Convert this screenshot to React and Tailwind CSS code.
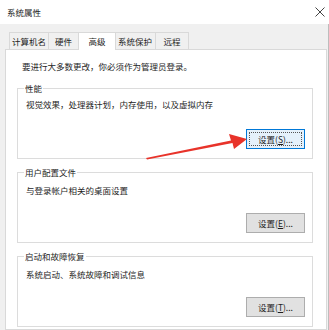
import React from "react";

function Btn({ label, k, focused }) {
  return (
    <div
      className={
        "w-[59px] h-[20px] flex items-center justify-center text-[8.5px] leading-none " +
        (focused
          ? "bg-[#e5f1fb] border border-[#0078d7] p-[2px]"
          : "bg-[#e1e1e1] border border-[#adadad]")
      }
    >
      {focused ? (
        <div className="w-full h-full border border-dotted border-[#555] flex items-center justify-center">
          <span>设置(<span className="underline">{k}</span>)...</span>
        </div>
      ) : (
        <span>设置(<span className="underline">{k}</span>)...</span>
      )}
    </div>
  );
}

function Group({ title, text, k, focused, pt }) {
  return (
    <div className="relative h-[71px] border border-[#dcdcdc] flex flex-col pl-[8px] pr-[7px]" style={{ paddingTop: pt }}>
      <span className="absolute left-[6px] -top-[9px] bg-white px-[1px] text-[8.5px] leading-[16px]">{title}</span>
      <div className="text-[8.5px] leading-[16px]">{text}</div>
      <div className="flex-1 flex items-end justify-end pb-[9px]">
        <Btn k={k} focused={focused} />
      </div>
    </div>
  );
}

export default function App() {
  return (
    <div
      className="relative w-[329px] h-[330px] overflow-hidden bg-white text-[#1e1e1e] flex flex-col"
      style={{ fontFamily: '"Noto Sans CJK SC", "Noto Sans", sans-serif' }}
    >
      <div className="h-[24px] flex items-center justify-between pl-[7px] pr-[2px] bg-white">
        <span className="text-[8.5px] leading-none">系统属性</span>
        <svg width="10" height="10" viewBox="0 0 10 10" className="mr-[2px]">
          <path d="M0.5 0.5L9.5 9.5M9.5 0.5L0.5 9.5" stroke="#444" strokeWidth="1" />
        </svg>
      </div>
      <div className="flex-1 bg-[#f0f0f0] flex flex-col pl-[5px] pr-[1px] border-r border-[#bdbdbd]">
        <div className="h-[25px] flex items-end pl-[4px] text-[8.5px]">
          <div className="h-[17px] w-[40px] border border-b-0 border-[#d9d9d9] flex items-center justify-center">计算机名</div>
          <div className="h-[17px] w-[30px] border border-b-0 border-l-0 border-[#d9d9d9] flex items-center justify-center">硬件</div>
          <div className="h-[18px] w-[38px] -mb-[1px] relative z-10 bg-white border border-b-0 border-[#d9d9d9] flex items-center justify-center -mx-[1px]">高级</div>
          <div className="h-[17px] w-[41px] border border-b-0 border-l-0 border-[#d9d9d9] flex items-center justify-center">系统保护</div>
          <div className="h-[17px] w-[33px] border border-b-0 border-l-0 border-[#d9d9d9] flex items-center justify-center">远程</div>
        </div>
        <div className="flex-1 bg-white border border-[#d9d9d9] pt-[8px] pl-[11px] pr-[13px] flex flex-col">
          <div className="text-[8.5px] leading-[16px] pl-[5px]">要进行大多数更改，你必须作为管理员登录。</div>
          <div className="mt-[14px] flex flex-col gap-[13px]">
            <Group title="性能" text="视觉效果，处理器计划，内存使用，以及虚拟内存" k="S" focused pt={7} />
            <Group title="用户配置文件" text="与登录帐户相关的桌面设置" k="E" pt={9} />
            <Group title="启动和故障恢复" text="系统启动、系统故障和调试信息" k="T" pt={9} />
          </div>
        </div>
      </div>
      <svg className="absolute left-0 top-0 pointer-events-none" width="329" height="330" viewBox="0 0 329 330">
        <polygon
          points="146,158 231,140.5 229,134 247,139 234,149 232.5,143 147,159.5"
          fill="#e8332a"
        />
      </svg>
    </div>
  );
}
